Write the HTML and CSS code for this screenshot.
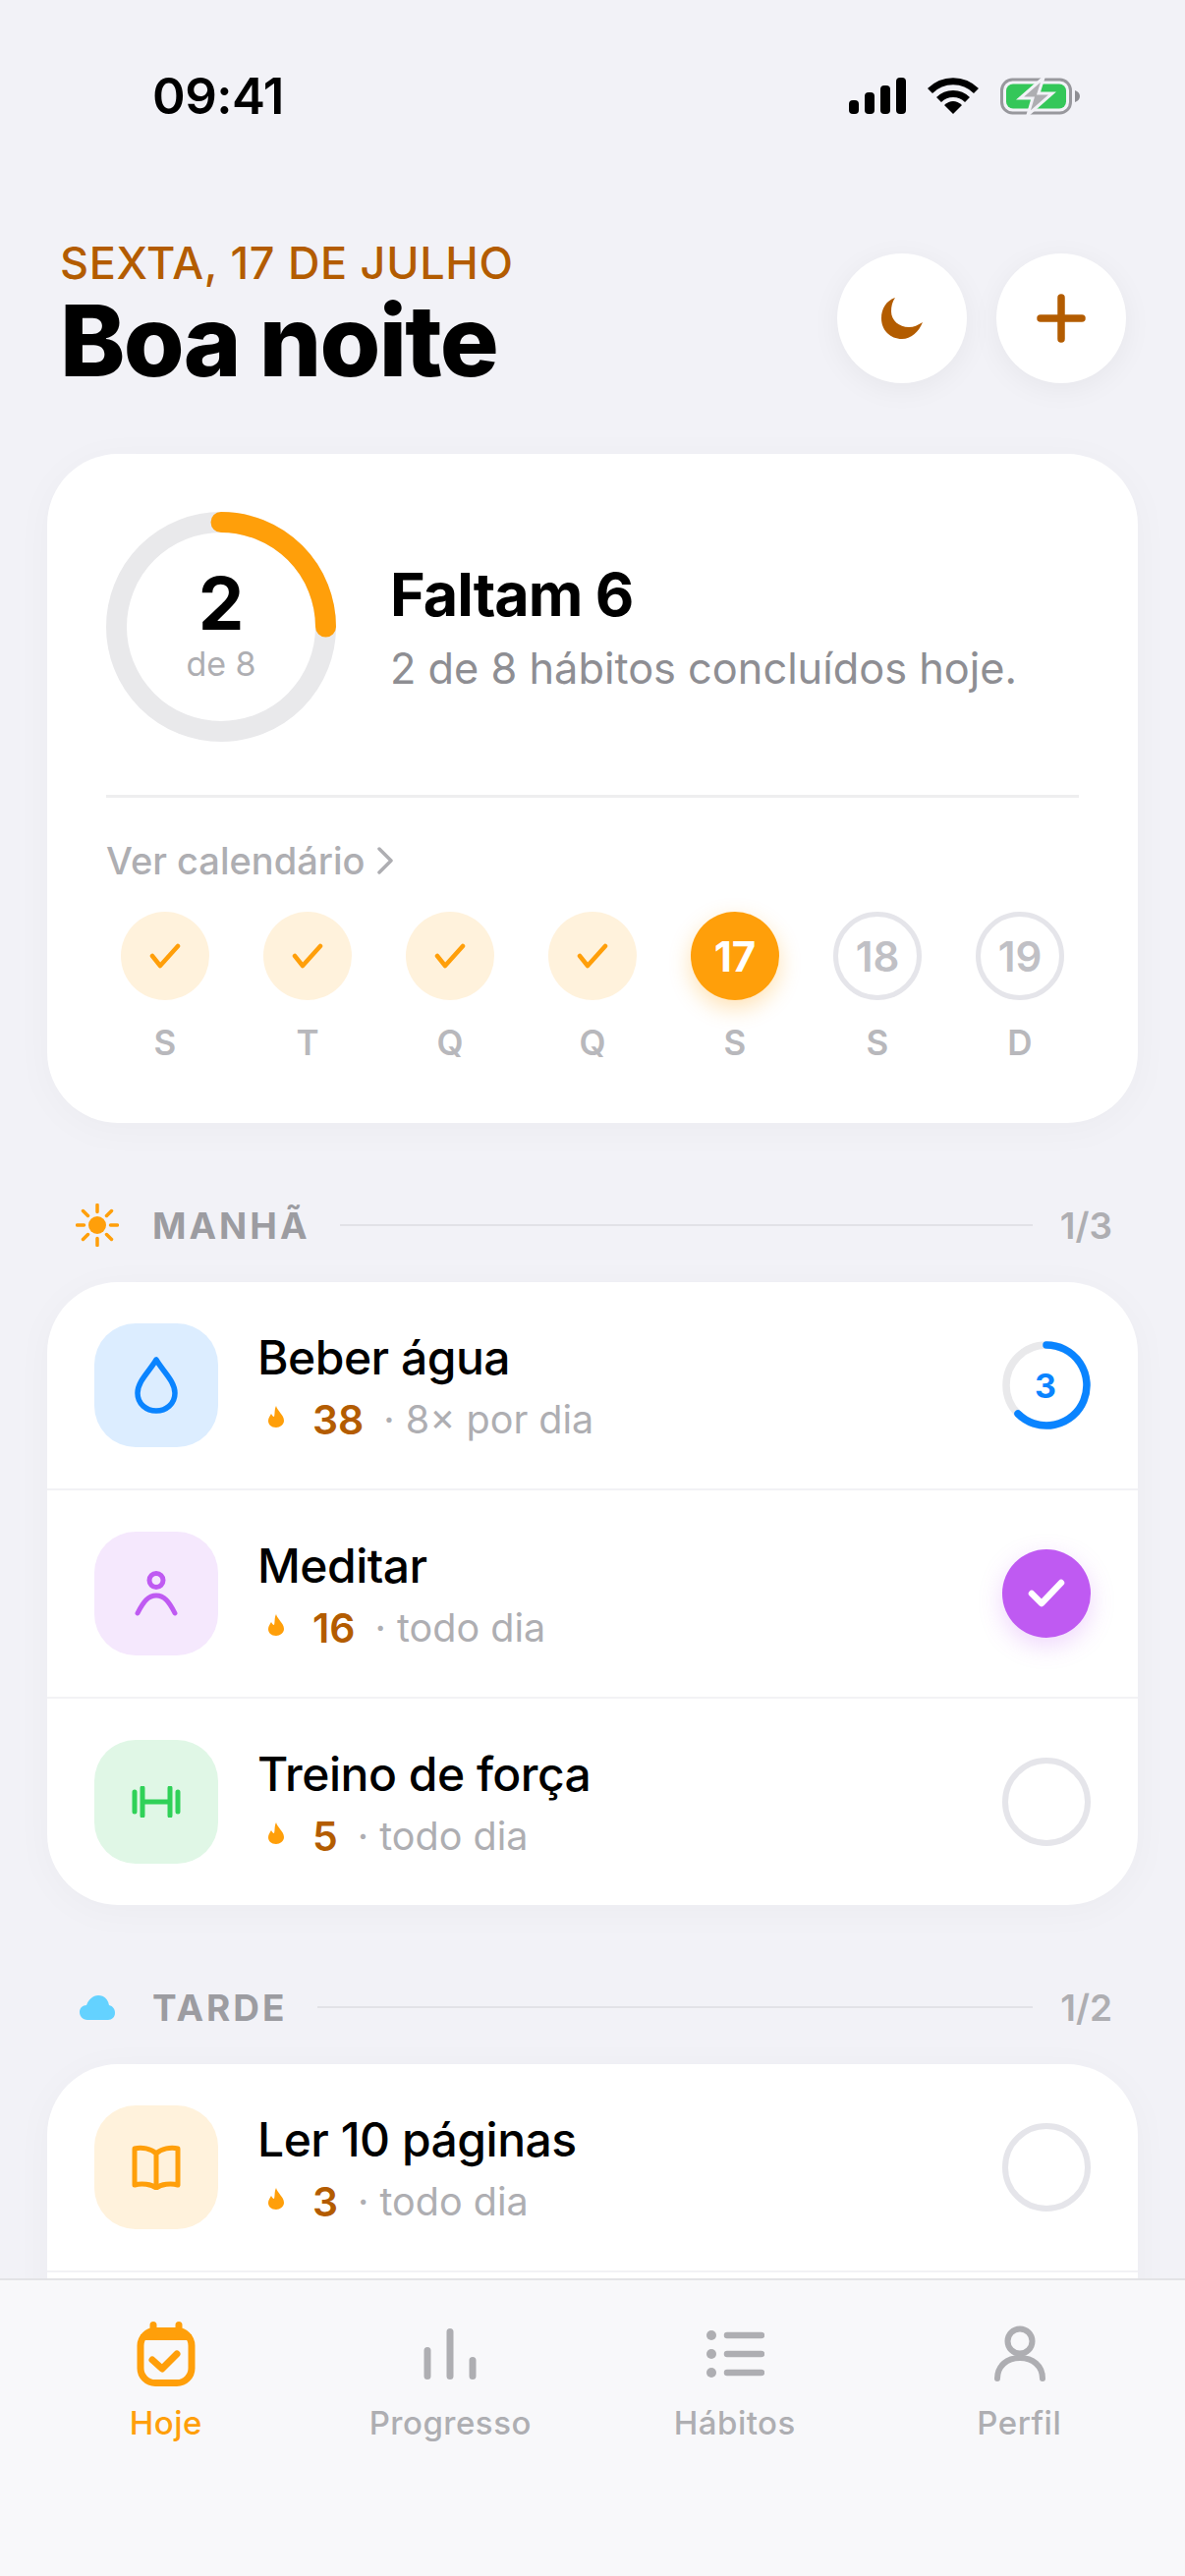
FILE: index.html
```html
<!DOCTYPE html>
<html lang="pt">
<head>
    <meta charset="UTF-8">
    <meta name="viewport" content="width=device-width, initial-scale=1.0">
    <title>Hoje</title>
    <link rel="stylesheet" href="styles.css">
</head>
<body>
    <div class="app">
        <div class="content">
            <div class="status">
                <span class="status-time">09:41</span>
                <div class="status-icons">
                    <svg width="58" height="37" viewBox="0 0 58 37">
                        <rect x="0" y="23" width="10" height="14" rx="4"/>
                        <rect x="16" y="15" width="10" height="22" rx="4"/>
                        <rect x="32" y="8" width="10" height="29" rx="4"/>
                        <rect x="48" y="0" width="10" height="37" rx="4"/>
                    </svg>
                    <svg width="52" height="37" viewBox="0 0 52 37">
                        <path d="M2.500 13.500 A33 33 0 0 1 49.500 13.500" fill="none" stroke="#000" stroke-width="7"/>
                        <path d="M11.500 22.500 A20.500 20.500 0 0 1 40.500 22.500" fill="none" stroke="#000" stroke-width="7"/>
                        <path d="M26 37 L17 28 Q26 20 35 28 Z"/>
                    </svg>
                    <svg width="82" height="38" viewBox="0 0 82 38">
                        <rect x="1.500" y="2" width="70" height="34" rx="11" fill="none" stroke="#98989d" stroke-width="3"/>
                        <rect x="6" y="6.500" width="61" height="25" rx="7" fill="#34c759"/>
                        <path d="M76 13 C79 14 81 16 81 19 C81 22 79 24 76 25 Z" fill="#8e8e93"/>
                        <path d="M44 0 L20 21 H33 L28 38 L53 16 H39 Z" fill="#aeaeb2" stroke="#f2f2f7" stroke-width="3"/>
                    </svg>
                </div>
            </div>

            <div class="header">
                <div class="header-text">
                    <div class="header-date">SEXTA, 17 DE JULHO</div>
                    <div class="header-title">Boa noite</div>
                </div>
                <div class="header-btns">
                    <div class="round-btn">
                        <svg width="42" height="42" viewBox="0 0 42 42">
                            <path d="M14 0 C5 3 0 11 0 21 C0 33 9 42 21 42 C30 42 38 35 42 25 C37 28 33 30 28 30 C18 30 10 23 10 14 C10 9 11 4 14 0 Z" fill="#b35c00"/>
                        </svg>
                    </div>
                    <div class="round-btn">
                        <svg width="50" height="50" viewBox="0 0 50 50">
                            <path d="M25 4 V46 M4 25 H46" stroke="#b35c00" stroke-width="7.500" stroke-linecap="round"/>
                        </svg>
                    </div>
                </div>
            </div>

            <div class="card summary">
                <div class="summary-top">
                    <div class="big-ring">
                        <svg width="234" height="234" viewBox="0 0 234 234">
                            <circle cx="117" cy="117" r="106.500" fill="none" stroke="#e9e9eb" stroke-width="21"/>
                            <path d="M117 10.500 A106.500 106.500 0 0 1 223.500 117" fill="none" stroke="#ff9f0a" stroke-width="21" stroke-linecap="round"/>
                        </svg>
                        <div class="big-ring-text">
                            <div class="big-ring-num">2</div>
                            <div class="big-ring-sub">de 8</div>
                        </div>
                    </div>
                    <div>
                        <div class="summary-title">Faltam 6</div>
                        <div class="summary-sub">2 de 8 hábitos concluídos hoje.</div>
                    </div>
                </div>
                <div class="summary-line"></div>
                <div class="calendar-link">Ver calendário
                    <svg width="18" height="28" viewBox="0 0 18 28">
                        <path d="M3 2 L15 14 L3 26" fill="none" stroke="#aeaeb2" stroke-width="3.500" stroke-linecap="round" stroke-linejoin="round"/>
                    </svg>
                </div>
                <div class="week">
                    <div class="day">
                        <div class="day-circle done"><svg width="32" height="26" viewBox="0 0 32 26"><path d="M3 13 L11 23 L29 3" fill="none" stroke="#ff9f0a" stroke-width="4.500" stroke-linecap="round" stroke-linejoin="round"/></svg></div>
                        <span class="day-label">S</span>
                    </div>
                    <div class="day">
                        <div class="day-circle done"><svg width="32" height="26" viewBox="0 0 32 26"><path d="M3 13 L11 23 L29 3" fill="none" stroke="#ff9f0a" stroke-width="4.500" stroke-linecap="round" stroke-linejoin="round"/></svg></div>
                        <span class="day-label">T</span>
                    </div>
                    <div class="day">
                        <div class="day-circle done"><svg width="32" height="26" viewBox="0 0 32 26"><path d="M3 13 L11 23 L29 3" fill="none" stroke="#ff9f0a" stroke-width="4.500" stroke-linecap="round" stroke-linejoin="round"/></svg></div>
                        <span class="day-label">Q</span>
                    </div>
                    <div class="day">
                        <div class="day-circle done"><svg width="32" height="26" viewBox="0 0 32 26"><path d="M3 13 L11 23 L29 3" fill="none" stroke="#ff9f0a" stroke-width="4.500" stroke-linecap="round" stroke-linejoin="round"/></svg></div>
                        <span class="day-label">Q</span>
                    </div>
                    <div class="day">
                        <div class="day-circle today">17</div>
                        <span class="day-label">S</span>
                    </div>
                    <div class="day">
                        <div class="day-circle next">18</div>
                        <span class="day-label">S</span>
                    </div>
                    <div class="day">
                        <div class="day-circle next">19</div>
                        <span class="day-label">D</span>
                    </div>
                </div>
            </div>

            <div class="section-head">
                <div class="section-icon">
                    <svg width="44" height="44" viewBox="0 0 44 44">
                        <circle cx="22" cy="22" r="9" fill="#ff9f0a"/>
                        <path d="M22 1.500 V8.500 M22 35.500 V42.500 M1.500 22 H8.500 M35.500 22 H42.500 M7.500 7.500 L12.500 12.500 M31.500 31.500 L36.500 36.500 M36.500 7.500 L31.500 12.500 M12.500 31.500 L7.500 36.500" stroke="#ff9f0a" stroke-width="3.500" stroke-linecap="round"/>
                    </svg>
                </div>
                <span class="section-name">MANHÃ</span>
                <div class="section-line"></div>
                <span class="section-count">1/3</span>
            </div>

            <div class="card list">
                <div class="row">
                    <div class="tile tile-blue">
                        <svg width="44" height="58" viewBox="0 0 44 58">
                            <path d="M22 3 C15 15 3 25 3 37 C3 48 12 55 22 55 C32 55 41 48 41 37 C41 25 29 15 22 3 Z" fill="none" stroke="#0a84ff" stroke-width="5.500" stroke-linejoin="round"/>
                        </svg>
                    </div>
                    <div class="row-text">
                        <div class="row-title">Beber água</div>
                        <div class="row-meta">
                            <svg class="flame" width="16" height="22" viewBox="0 0 16 22"><path d="M8 0 C9 5 16 9 16 15 C16 19 12 22 8 22 C3 22 0 19 0 15 C0 12 2 10 3 8 C4 10 5 11 6 11 C7 8 6 4 8 0 Z" fill="#ff9f0a"/></svg>
                            <span class="streak">38</span>
                            <span class="freq">· 8× por dia</span>
                        </div>
                    </div>
                    <div class="count-ring">
                        <svg width="90" height="90" viewBox="0 0 90 90">
                            <circle cx="45" cy="45" r="41" fill="none" stroke="#e9e9eb" stroke-width="7.500"/>
                            <path d="M45 4 A41 41 0 1 1 16 74" fill="none" stroke="#0a84ff" stroke-width="7.500" stroke-linecap="round"/>
                        </svg>
                        <span class="count-num">3</span>
                    </div>
                </div>
                <div class="row">
                    <div class="tile tile-purple">
                        <svg width="44" height="46" viewBox="0 0 44 46">
                            <circle cx="22" cy="9.500" r="7" fill="none" stroke="#bf5af2" stroke-width="5"/>
                            <path d="M3 43 C9 31 14 25 22 25 C30 25 35 31 41 43" fill="none" stroke="#bf5af2" stroke-width="5" stroke-linecap="round"/>
                        </svg>
                    </div>
                    <div class="row-text">
                        <div class="row-title">Meditar</div>
                        <div class="row-meta">
                            <svg class="flame" width="16" height="22" viewBox="0 0 16 22"><path d="M8 0 C9 5 16 9 16 15 C16 19 12 22 8 22 C3 22 0 19 0 15 C0 12 2 10 3 8 C4 10 5 11 6 11 C7 8 6 4 8 0 Z" fill="#ff9f0a"/></svg>
                            <span class="streak">16</span>
                            <span class="freq">· todo dia</span>
                        </div>
                    </div>
                    <div class="check-done">
                        <svg width="38" height="30" viewBox="0 0 38 30">
                            <path d="M4 15 L14 25 L34 4" fill="none" stroke="#fff" stroke-width="6.500" stroke-linecap="round" stroke-linejoin="round"/>
                        </svg>
                    </div>
                </div>
                <div class="row">
                    <div class="tile tile-green">
                        <svg width="50" height="32" viewBox="0 0 50 32">
                            <path d="M3 6 V26 M47 6 V26 M11 2 V30 M39 2 V30 M11 16 H39" fill="none" stroke="#30d158" stroke-width="5" stroke-linecap="round"/>
                        </svg>
                    </div>
                    <div class="row-text">
                        <div class="row-title">Treino de força</div>
                        <div class="row-meta">
                            <svg class="flame" width="16" height="22" viewBox="0 0 16 22"><path d="M8 0 C9 5 16 9 16 15 C16 19 12 22 8 22 C3 22 0 19 0 15 C0 12 2 10 3 8 C4 10 5 11 6 11 C7 8 6 4 8 0 Z" fill="#ff9f0a"/></svg>
                            <span class="streak">5</span>
                            <span class="freq">· todo dia</span>
                        </div>
                    </div>
                    <div class="check-empty"></div>
                </div>
            </div>

            <div class="section-head">
                <div class="section-icon">
                    <svg width="36" height="25" viewBox="0 0 36 25">
                        <path d="M8 25 C3 25 0 21 0 17 C0 13 3 10 7 10 C9 4 14 0 19 0 C25 0 29 4 30 10 C34 11 36 14 36 18 C36 22 33 25 29 25 Z" fill="#64d2ff"/>
                    </svg>
                </div>
                <span class="section-name">TARDE</span>
                <div class="section-line"></div>
                <span class="section-count">1/2</span>
            </div>

            <div class="card list">
                <div class="row">
                    <div class="tile tile-orange">
                        <svg width="50" height="46" viewBox="0 0 50 46">
                            <path d="M25 9 C20 4 10 2 3 4 V41 C10 39 20 40 25 44 C30 40 40 39 47 41 V4 C40 2 30 4 25 9 Z M25 9 V44" fill="none" stroke="#ff9f0a" stroke-width="5" stroke-linejoin="round"/>
                        </svg>
                    </div>
                    <div class="row-text">
                        <div class="row-title">Ler 10 páginas</div>
                        <div class="row-meta">
                            <svg class="flame" width="16" height="22" viewBox="0 0 16 22"><path d="M8 0 C9 5 16 9 16 15 C16 19 12 22 8 22 C3 22 0 19 0 15 C0 12 2 10 3 8 C4 10 5 11 6 11 C7 8 6 4 8 0 Z" fill="#ff9f0a"/></svg>
                            <span class="streak">3</span>
                            <span class="freq">· todo dia</span>
                        </div>
                    </div>
                    <div class="check-empty"></div>
                </div>
                <div class="row"></div>
            </div>
        </div>

        <div class="tabbar">
            <div class="tab active">
                <svg width="60" height="66" viewBox="0 0 60 66">
                    <rect x="4" y="9.500" width="52" height="53" rx="15" fill="none" stroke="#ff9f0a" stroke-width="7"/>
                    <path d="M4 16 H56" stroke="#ff9f0a" stroke-width="6"/>
                    <path d="M17 3.500 V14 M43 3.500 V14" stroke="#ff9f0a" stroke-width="7" stroke-linecap="round"/>
                    <path d="M16 39 L26 48 L41 33" fill="none" stroke="#ff9f0a" stroke-width="7" stroke-linecap="round" stroke-linejoin="round"/>
                </svg>
                <span>Hoje</span>
            </div>
            <div class="tab">
                <svg width="60" height="66" viewBox="0 0 60 66">
                    <path d="M7 29.500 V55.500 M30 10.500 V55.500 M53 39.500 V55.500" stroke="#aeaeb2" stroke-width="7" stroke-linecap="round"/>
                </svg>
                <span>Progresso</span>
            </div>
            <div class="tab">
                <svg width="60" height="66" viewBox="0 0 60 66">
                    <circle cx="6" cy="14" r="5" fill="#aeaeb2"/>
                    <circle cx="6" cy="33" r="5" fill="#aeaeb2"/>
                    <circle cx="6" cy="52" r="5" fill="#aeaeb2"/>
                    <path d="M22 14 H57 M22 33 H57 M22 52 H57" stroke="#aeaeb2" stroke-width="6.500" stroke-linecap="round"/>
                </svg>
                <span>Hábitos</span>
            </div>
            <div class="tab">
                <svg width="60" height="66" viewBox="0 0 60 66">
                    <circle cx="31" cy="20" r="12.500" fill="none" stroke="#aeaeb2" stroke-width="6"/>
                    <path d="M8 58 C8 45 18 37 31 37 C44 37 54 45 54 58" fill="none" stroke="#aeaeb2" stroke-width="6" stroke-linecap="round"/>
                </svg>
                <span>Perfil</span>
            </div>
        </div>
    </div>
</body>
</html>
```

FILE: styles.css
```css
* {
    box-sizing: border-box;
}

body {
    margin: 0;
    font-family: Inter, "Noto Sans", sans-serif;
    background-color: #f2f2f7;
    color: #000;
}

.app {
    display: flex;
    flex-direction: column;
    height: 2622px;
    overflow: hidden;
}

.content {
    flex: 1;
    min-height: 0;
    overflow: hidden;
}

/* status bar */
.status {
    display: flex;
    justify-content: space-between;
    align-items: center;
    height: 116px;
    padding: 79px 106px 0 155px;
}

.status-time {
    font-size: 51px;
    font-weight: 600;
    letter-spacing: -0.5px;
    line-height: 38px;
}

.status-icons {
    display: flex;
    align-items: center;
    gap: 22px;
}

/* header */
.header {
    display: flex;
    justify-content: space-between;
    align-items: center;
    height: 160px;
    margin-top: 128px;
    padding: 0 60px 0 61px;
}

.header-text {
    margin-top: -8px;
}

.header-date {
    font-size: 45px;
    font-weight: 500;
    line-height: 46px;
    letter-spacing: 0.7px;
    color: #b35c00;
}

.header-title {
    font-size: 100px;
    font-weight: 800;
    line-height: 96px;
    letter-spacing: -1.8px;
    margin-top: 8px;
}

.header-btns {
    display: flex;
    gap: 30px;
}

.round-btn {
    display: flex;
    align-items: center;
    justify-content: center;
    width: 132px;
    height: 132px;
    border-radius: 50%;
    background-color: #fff;
    box-shadow: 0 6px 30px rgba(0, 0, 0, 0.05);
}

/* cards */
.card {
    margin: 0 48px;
    background-color: #fff;
    border-radius: 72px;
    box-shadow: 0 6px 40px rgba(0, 0, 0, 0.03);
}

.summary {
    height: 681px;
    margin-top: 58px;
    padding: 59px 60px 0;
}

.summary-top {
    display: flex;
    align-items: flex-start;
    gap: 55px;
}

.big-ring {
    display: grid;
    place-items: center;
    width: 234px;
    height: 234px;
}

.big-ring svg, .big-ring-text {
    grid-area: 1 / 1;
}

.big-ring-text {
    text-align: center;
}

.big-ring-num {
    font-size: 74px;
    font-weight: 700;
    line-height: 66px;
}

.big-ring-sub {
    font-size: 34px;
    line-height: 40px;
    margin-top: 9px;
    color: #aeaeb2;
}

.summary-title {
    font-size: 61px;
    font-weight: 700;
    line-height: 70px;
    letter-spacing: -1px;
    margin-top: 49px;
}

.summary-sub {
    font-size: 43.300px;
    line-height: 52px;
    margin-top: 14px;
    color: #8e8e93;
}

.summary-line {
    height: 3px;
    margin-top: 54px;
    background-color: #eeeeef;
}

.calendar-link {
    display: flex;
    align-items: center;
    gap: 12px;
    height: 44px;
    margin-top: 42px;
    font-size: 38px;
    font-weight: 500;
    color: #aeaeb2;
}

.week {
    display: flex;
    justify-content: space-between;
    margin-top: 30px;
    padding: 0 15px;
}

.day {
    display: flex;
    flex-direction: column;
    align-items: center;
    gap: 23px;
}

.day-circle {
    display: flex;
    align-items: center;
    justify-content: center;
    width: 90px;
    height: 90px;
    border-radius: 50%;
    font-size: 42px;
    font-weight: 600;
}

.day-circle.done {
    background-color: #fff2dc;
}

.day-circle.today {
    background-color: #ff9f0a;
    color: #fff;
    font-weight: 700;
    box-shadow: 0 8px 22px rgba(255, 159, 10, 0.3);
}

.day-circle.next {
    border: 5px solid #e5e5ea;
    color: #c0c0c5;
}

.day-label {
    font-size: 35px;
    font-weight: 600;
    line-height: 40px;
    color: #b8b8bc;
}

/* sections */
.section-head {
    display: flex;
    align-items: center;
    height: 58px;
    margin: 75px 48px 29px 77px;
    padding-right: 26px;
}

.section-icon {
    display: flex;
    justify-content: center;
    width: 44px;
    margin-right: 34px;
}

.section-name {
    font-size: 37px;
    font-weight: 700;
    letter-spacing: 3px;
    color: #9c9ca1;
}

.section-line {
    flex: 1;
    height: 2px;
    margin: 0 28px 0 30px;
    background-color: #e2e2e7;
}

.section-count {
    font-size: 37px;
    font-weight: 600;
    color: #aeaeb2;
}

/* habit rows */
.row {
    display: flex;
    align-items: center;
    height: 212px;
    padding: 0 48px;
    border-bottom: 2px solid #f2f2f5;
}

.list .row:last-child {
    height: 210px;
    border-bottom: none;
}

.tile {
    display: flex;
    align-items: center;
    justify-content: center;
    width: 126px;
    height: 126px;
    border-radius: 42px;
}

.tile-blue {
    background-color: #dcedff;
}

.tile-purple {
    background-color: #f5e8fd;
}

.tile-green {
    background-color: #e0f7e6;
}

.tile-orange {
    background-color: #fff2dc;
}

.row-text {
    flex: 1;
    margin-left: 40px;
    padding-top: 3px;
}

.row-title {
    font-size: 48px;
    font-weight: 500;
    line-height: 58px;
    letter-spacing: -0.5px;
}

.row-meta {
    display: flex;
    align-items: center;
    height: 50px;
    margin-top: 9px;
}

.flame {
    margin: -6px 29px 0 11px;
}

.streak {
    font-size: 41px;
    font-weight: 600;
    color: #b35c00;
    margin-right: 20px;
}

.freq {
    font-size: 39.500px;
    color: #aeaeb2;
}

.count-ring {
    display: grid;
    place-items: center;
    width: 90px;
    height: 90px;
}

.count-ring svg, .count-num {
    grid-area: 1 / 1;
}

.count-num {
    font-size: 34px;
    font-weight: 700;
    margin-left: -2px;
    color: #0a84ff;
}

.check-done {
    display: flex;
    align-items: center;
    justify-content: center;
    width: 90px;
    height: 90px;
    border-radius: 50%;
    background-color: #bf5af2;
    box-shadow: 0 8px 24px rgba(191, 90, 242, 0.25);
}

.check-empty {
    width: 90px;
    height: 90px;
    border-radius: 50%;
    border: 6px solid #e5e5ea;
}

/* tab bar */
.tabbar {
    display: grid;
    grid-template-columns: repeat(4, 1fr);
    height: 303px;
    padding: 42px 24px 0;
    background-color: #f8f8fa;
    border-top: 2px solid #e3e3e6;
}

.tab {
    display: flex;
    flex-direction: column;
    align-items: center;
    font-size: 33px;
    font-weight: 500;
    letter-spacing: 0.5px;
    color: #aeaeb2;
}

.tab span {
    margin-top: 17px;
    line-height: 40px;
}

.tab.active {
    color: #ff9f0a;
}
```
